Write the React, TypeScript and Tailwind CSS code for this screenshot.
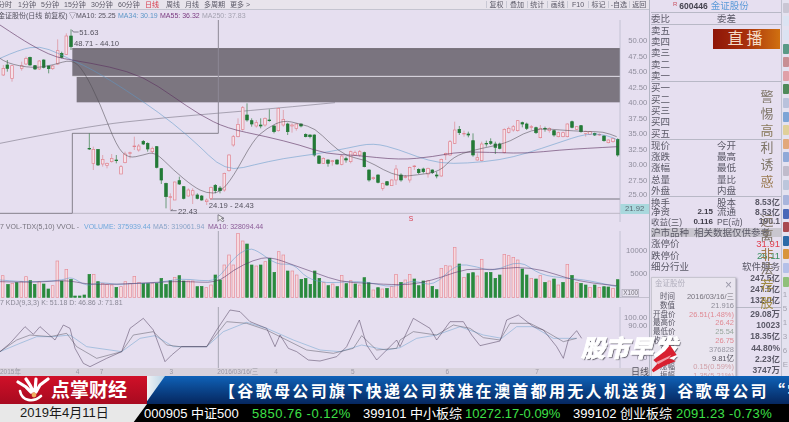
import React from 'react';

type Pt = [number, number];
// coordinates are 3x page pixels, straight from the reference
type Candle = [number, number, number, number, number, 'r' | 'g'];
type Bar = [number, number, 'r' | 'g'];

const shift = <T extends number[] | (number | string)[]>(list: T[], dx: number): T[] =>
    list.map((c) => [(c[0] as number) + dx, ...c.slice(1)] as unknown as T);

const candles: Candle[] = [
    [10, 205, 225, 195, 228, 'r'], [22, 195, 205, 180, 215, 'g'], [36, 197, 235, 195, 245, 'r'], [65, 197, 205, 185, 212, 'r'],
    [78, 175, 192, 170, 195, 'r'], [90, 172, 195, 170, 197, 'g'], [105, 197, 207, 195, 210, 'g'], [118, 183, 207, 180, 210, 'r'],
    [131, 180, 202, 178, 205, 'g'], [146, 198, 206, 198, 220, 'g'], [158, 198, 206, 195, 210, 'r'], [173, 152, 192, 118, 195, 'r'],
    [185, 160, 172, 155, 175, 'g'], [199, 108, 163, 100, 165, 'r'], [213, 108, 140, 88, 150, 'g'],
    [268, 445, 447, 400, 450, 'g'], [280, 448, 490, 440, 510, 'r'], [294, 448, 495, 448, 498, 'g'], [308, 478, 492, 465, 500, 'r'],
    [321, 490, 496, 488, 505, 'r'], [335, 475, 485, 462, 488, 'r'], [349, 480, 482, 465, 490, 'g'], [363, 500, 522, 495, 522, 'r'],
    [375, 462, 488, 455, 490, 'r'], [390, 458, 460, 455, 475, 'r'], [403, 438, 440, 410, 450, 'r'], [416, 438, 450, 432, 455, 'r'],
    [430, 424, 432, 420, 435, 'g'], [443, 430, 447, 427, 455, 'g'], [457, 445, 455, 440, 462, 'r'], [470, 440, 502, 438, 505, 'g'],
    [484, 506, 540, 505, 552, 'g'], [498, 550, 590, 548, 625, 'g'], [511, 590, 592, 580, 630, 'r'], [524, 546, 600, 545, 600, 'r'],
    [538, 542, 552, 530, 555, 'g'], [551, 560, 595, 558, 598, 'g'], [565, 570, 588, 565, 590, 'r'], [578, 572, 585, 565, 612, 'r'],
    [592, 585, 595, 580, 598, 'g'], [605, 588, 600, 585, 602, 'g'], [620, 600, 605, 595, 615, 'r'], [633, 562, 595, 560, 600, 'r'],
    [646, 556, 572, 552, 580, 'g'], [660, 564, 572, 558, 580, 'g'], [673, 520, 570, 518, 575, 'r'], [687, 465, 512, 463, 515, 'r'],
    [700, 410, 435, 405, 440, 'r'], [714, 373, 410, 355, 412, 'r'], [728, 323, 388, 318, 392, 'r'], [741, 345, 360, 310, 365, 'g'],
    [755, 362, 372, 355, 380, 'g'], [769, 368, 378, 360, 383, 'r'], [782, 375, 378, 355, 385, 'g'], [795, 355, 375, 352, 380, 'r'],
    [808, 360, 362, 328, 365, 'g'], [822, 378, 395, 375, 400, 'g'], [835, 325, 392, 323, 395, 'r'], [850, 358, 375, 330, 380, 'r'],
    [863, 372, 395, 368, 405, 'g'], [876, 375, 378, 370, 398, 'r'], [889, 372, 385, 370, 392, 'r'], [903, 372, 378, 370, 382, 'g'],
    [917, 403, 410, 400, 412, 'g'], [930, 405, 410, 403, 415, 'g'], [943, 405, 465, 403, 470, 'g'], [957, 468, 490, 465, 492, 'g'],
    [970, 475, 490, 472, 492, 'r'], [984, 480, 490, 478, 500, 'g'], [997, 482, 485, 480, 497, 'r'], [1011, 480, 492, 478, 494, 'g'],
    [1025, 468, 493, 465, 496, 'r'], [1038, 476, 480, 470, 488, 'g'], [1052, 455, 485, 452, 490, 'r'], [1065, 458, 465, 452, 468, 'r'],
    [1079, 455, 465, 450, 470, 'r'], [1093, 458, 500, 455, 502, 'g'], [1107, 510, 540, 508, 545, 'g'], [1120, 533, 536, 530, 540, 'r'],
    [1134, 525, 547, 523, 550, 'g'], [1148, 550, 565, 548, 572, 'r'], [1161, 545, 555, 543, 558, 'g'], [1175, 540, 557, 538, 558, 'r'],
    [1188, 507, 540, 495, 555, 'r'],
    ...shift<Candle>([
        [3, 525, 540, 520, 545, 'g'], [16, 530, 532, 525, 535, 'r'], [29, 502, 540, 500, 548, 'r'], [43, 498, 500, 495, 510, 'r'],
        [56, 508, 518, 505, 522, 'g'], [70, 507, 515, 503, 520, 'g'], [84, 505, 522, 503, 533, 'r'], [97, 510, 518, 508, 522, 'g'],
        [110, 525, 528, 515, 535, 'g'], [124, 478, 528, 476, 530, 'r'], [137, 460, 465, 458, 480, 'r'], [150, 425, 465, 420, 467, 'r'],
        [164, 390, 430, 365, 432, 'r'], [178, 388, 398, 378, 405, 'g'], [192, 400, 402, 392, 410, 'r'], [205, 402, 405, 395, 412, 'g'],
        [219, 422, 465, 400, 470, 'g'], [232, 473, 480, 460, 482, 'r'], [245, 432, 482, 425, 484, 'r'], [259, 430, 432, 422, 440, 'g'],
        [272, 425, 430, 415, 435, 'g'], [286, 432, 442, 425, 462, 'g'], [299, 432, 445, 428, 448, 'g'], [313, 388, 458, 385, 460, 'r'],
        [326, 385, 397, 380, 400, 'r'], [340, 380, 390, 375, 395, 'r'], [353, 362, 392, 360, 395, 'r'], [367, 368, 372, 365, 382, 'g'],
        [380, 372, 385, 368, 390, 'g'], [394, 380, 382, 375, 390, 'r'], [408, 383, 398, 380, 402, 'g'], [421, 385, 413, 375, 415, 'r'],
        [435, 385, 387, 380, 395, 'g'], [448, 385, 392, 382, 398, 'r'], [462, 392, 405, 390, 410, 'g'], [475, 398, 410, 395, 412, 'r'],
        [489, 398, 410, 395, 412, 'r'], [502, 372, 410, 370, 412, 'r'], [516, 365, 382, 362, 385, 'g'], [530, 380, 388, 378, 390, 'r'],
        [543, 377, 395, 375, 398, 'g'], [557, 395, 400, 392, 410, 'r'], [570, 395, 403, 393, 405, 'r'], [584, 400, 405, 398, 408, 'g'],
        [598, 403, 405, 400, 408, 'r'], [612, 408, 422, 405, 425, 'g'], [625, 420, 428, 418, 430, 'r'], [639, 415, 425, 413, 428, 'r'],
        [653, 418, 465, 415, 470, 'g'],
    ], 1200),
];

const bars: Bar[] = [
    [8, 182, 'r'], [24, 208, 'g'], [37, 205, 'r'], [50, 203, 'g'], [64, 200, 'r'], [78, 185, 'r'], [91, 197, 'g'], [104, 208, 'g'],
    [118, 200, 'r'], [131, 207, 'g'], [145, 222, 'g'], [158, 212, 'r'], [172, 138, 'r'], [185, 198, 'g'], [199, 163, 'r'], [213, 193, 'g'],
    [225, 243, 'g'], [239, 243, 'g'], [253, 240, 'g'], [268, 178, 'g'], [281, 178, 'r'], [294, 200, 'g'], [308, 205, 'r'], [321, 208, 'r'],
    [335, 210, 'r'], [349, 217, 'g'], [363, 215, 'r'], [376, 200, 'r'], [390, 205, 'r'], [403, 184, 'r'], [417, 202, 'r'], [430, 205, 'g'],
    [444, 205, 'g'], [457, 205, 'r'], [470, 205, 'g'], [484, 190, 'g'], [498, 208, 'g'], [511, 197, 'g'], [524, 187, 'r'], [538, 182, 'g'],
    [551, 198, 'g'], [565, 198, 'r'], [578, 198, 'r'], [592, 215, 'g'], [605, 214, 'g'], [619, 218, 'r'], [633, 210, 'r'], [646, 180, 'g'],
    [660, 195, 'g'], [673, 150, 'r'], [687, 120, 'r'], [700, 150, 'r'], [714, 55, 'r'], [728, 78, 'r'], [741, 87, 'g'], [755, 150, 'g'],
    [769, 153, 'r'], [782, 150, 'g'], [796, 140, 'r'], [809, 130, 'g'], [823, 172, 'g'], [836, 110, 'r'], [850, 120, 'r'], [863, 168, 'g'],
    [877, 168, 'r'], [890, 180, 'r'], [904, 193, 'g'], [917, 190, 'g'], [931, 208, 'g'], [944, 168, 'g'], [958, 190, 'g'], [971, 203, 'r'],
    [985, 212, 'g'], [998, 207, 'r'], [1012, 215, 'g'], [1025, 181, 'r'], [1039, 206, 'g'], [1052, 197, 'r'], [1066, 207, 'g'], [1079, 210, 'r'],
    [1093, 188, 'g'], [1106, 203, 'g'], [1120, 225, 'r'], [1134, 218, 'g'], [1147, 222, 'r'], [1161, 220, 'g'], [1175, 215, 'r'], [1188, 178, 'r'],
    ...shift<Bar>([
        [3, 202, 'g'], [16, 195, 'r'], [29, 178, 'r'], [43, 192, 'g'], [56, 212, 'g'], [70, 198, 'g'], [84, 197, 'r'], [97, 214, 'g'],
        [110, 224, 'g'], [124, 160, 'r'], [137, 152, 'r'], [150, 153, 'r'], [164, 97, 'r'], [178, 147, 'g'], [192, 187, 'r'], [205, 176, 'g'],
        [219, 173, 'g'], [232, 183, 'r'], [245, 133, 'r'], [259, 173, 'g'], [272, 172, 'g'], [286, 190, 'g'], [299, 180, 'g'], [313, 118, 'r'],
        [326, 122, 'r'], [340, 127, 'r'], [353, 135, 'r'], [367, 162, 'g'], [380, 180, 'g'], [394, 190, 'r'], [408, 192, 'g'], [421, 182, 'r'],
        [435, 202, 'g'], [448, 198, 'r'], [462, 192, 'g'], [475, 210, 'r'], [489, 202, 'g'], [502, 148, 'r'], [516, 181, 'g'], [530, 203, 'r'],
        [543, 205, 'g'], [557, 210, 'g'], [570, 217, 'r'], [584, 210, 'g'], [598, 217, 'r'], [612, 215, 'g'], [625, 216, 'g'], [639, 220, 'r'],
        [653, 194, 'g'],
    ], 1200),
];

const ma10: Pt[] = [[0, 175], [20, 190], [100, 205], [160, 195], [215, 178], [250, 210], [300, 310], [350, 440], [385, 475], [430, 465], [465, 455], [520, 510], [580, 560], [620, 580], [660, 578], [700, 530], [760, 420], [800, 385], [850, 360], [900, 372], [945, 385], [990, 430], [1040, 470], [1100, 480], [1150, 510], [1200, 530], [1250, 525], [1320, 515], [1360, 470], [1420, 450], [1520, 430], [1570, 400], [1620, 385], [1680, 390], [1760, 395], [1810, 395], [1850, 410]];
const ma34: Pt[] = [[0, 175], [60, 148], [120, 138], [175, 160], [215, 180], [260, 200], [330, 240], [430, 305], [520, 370], [600, 440], [650, 490], [700, 510], [760, 495], [850, 475], [950, 462], [1040, 445], [1120, 428], [1200, 450], [1250, 470], [1320, 490], [1400, 490], [1500, 480], [1580, 460], [1670, 430], [1760, 400], [1820, 405], [1853, 420]];
const ma55: Pt[] = [[0, 75], [60, 115], [120, 150], [170, 172], [215, 180], [330, 200], [430, 230], [520, 290], [600, 345], [680, 385], [800, 410], [900, 435], [980, 462], [1060, 465], [1200, 480], [1300, 470], [1380, 455], [1500, 458], [1580, 460], [1680, 450], [1760, 445], [1853, 440]];
const ma250: Pt[] = [[0, 430], [250, 380], [500, 352], [750, 332], [1005, 308]];

const volA: Pt[] = [[0, 195], [60, 200], [120, 200], [190, 195], [215, 185], [260, 215], [300, 200], [350, 210], [400, 205], [470, 205], [540, 190], [600, 197], [650, 197], [700, 130], [740, 100], [770, 105], [830, 150], [880, 145], [920, 190], [980, 205], [1040, 200], [1100, 200], [1160, 215], [1200, 212], [1240, 195], [1300, 215], [1370, 145], [1430, 155], [1480, 170], [1560, 135], [1620, 180], [1700, 190], [1760, 195], [1850, 215]];
const volB: Pt[] = [[0, 200], [100, 203], [200, 195], [260, 208], [350, 208], [450, 203], [550, 198], [650, 205], [700, 165], [760, 135], [810, 125], [880, 150], [950, 175], [1020, 200], [1100, 205], [1200, 210], [1260, 205], [1330, 185], [1400, 160], [1480, 165], [1550, 155], [1630, 165], [1700, 190], [1780, 205], [1850, 212]];

const kdjJ: Pt[] = [[0, 410], [30, 385], [75, 335], [100, 358], [120, 335], [165, 375], [190, 330], [210, 340], [225, 400], [250, 445], [270, 455], [320, 430], [365, 410], [390, 340], [430, 310], [460, 345], [495, 440], [515, 420], [545, 395], [620, 395], [650, 345], [690, 285], [720, 290], [750, 320], [800, 340], [825, 395], [840, 360], [865, 400], [890, 410], [925, 435], [960, 438], [1010, 425], [1040, 395], [1078, 315], [1100, 390], [1130, 435], [1190, 375], [1200, 395], [1240, 310], [1290, 340], [1310, 375], [1350, 320], [1390, 320], [1415, 360], [1440, 392], [1500, 378], [1520, 315], [1555, 300], [1600, 335], [1630, 345], [1670, 395], [1690, 430], [1705, 375], [1730, 347], [1745, 370]];
const kdjK: Pt[] = [[0, 410], [50, 375], [90, 360], [150, 365], [200, 355], [230, 395], [290, 430], [365, 410], [400, 360], [460, 350], [500, 390], [540, 395], [620, 395], [680, 320], [740, 325], [800, 345], [860, 375], [920, 405], [1000, 415], [1060, 400], [1085, 362], [1130, 405], [1190, 400], [1200, 375], [1240, 350], [1310, 360], [1360, 330], [1410, 340], [1450, 368], [1500, 375], [1530, 325], [1590, 325], [1630, 345], [1690, 380], [1730, 370]];
const kdjD: Pt[] = [[0, 410], [60, 385], [110, 365], [160, 365], [210, 360], [260, 395], [365, 410], [420, 370], [465, 362], [520, 395], [620, 395], [670, 350], [740, 322], [800, 340], [880, 375], [960, 405], [1020, 410], [1085, 390], [1160, 405], [1200, 398], [1250, 370], [1310, 360], [1380, 335], [1450, 360], [1505, 370], [1550, 335], [1600, 335], [1660, 370], [1730, 370]];

const smooth = (p: Pt[]) => {
    let d = `M${p[0][0]} ${p[0][1]}`;
    for (let i = 1; i < p.length - 1; i++) {
        d += ` Q${p[i][0]} ${p[i][1]} ${(p[i][0] + p[i + 1][0]) / 2} ${(p[i][1] + p[i + 1][1]) / 2}`;
    }
    return `${d} L${p[p.length - 1][0]} ${p[p.length - 1][1]}`;
};
const poly = (p: Pt[]) => p.map((c) => c.join(',')).join(' ');

function PriceChart() {
    const axis: [string, number][] = [['50.00', 128], ['47.50', 176], ['45.00', 221], ['42.50', 269], ['40.00', 314], ['37.50', 362], ['35.00', 407], ['32.50', 455], ['30.00', 500], ['27.50', 548], ['25.00', 591]];
    return (
        <svg viewBox="0 60 1947 606" className="block h-[202px] w-[649px]">
            <path d={smooth(ma250)} fill="none" stroke="#6d6a78" strokeWidth="1.6" />
            <rect x="217" y="145" width="1643" height="83" fill="#7a747f" />
            <rect x="230" y="230" width="1630" height="77" fill="#7c7680" />
            <line x1="217" y1="229" x2="1860" y2="229" stroke="#d8d4dc" strokeWidth="3" />
            <line x1="217" y1="146" x2="1860" y2="146" stroke="#5f5a63" strokeWidth="2" />
            <line x1="655" y1="60" x2="655" y2="400" stroke="#8d8996" strokeWidth="3" />
            <path d="M217 400H655M217 400V640M0 640H217" fill="none" stroke="#55525a" strokeWidth="2" />
            <line x1="630" y1="597" x2="1860" y2="597" stroke="#77747e" strokeWidth="3" />
            <line x1="217" y1="640" x2="1860" y2="640" stroke="#a8a4b0" strokeWidth="2" />
            <line x1="1860" y1="60" x2="1860" y2="666" stroke="#b4b6c4" strokeWidth="2" />
            {candles.map(([x, top, bot, wt, wb, c]) => (
                <g key={x}>
                    <line x1={x} y1={wt} x2={x} y2={wb} stroke={c === 'r' ? '#dd8a94' : '#2d7a3f'} strokeWidth="2" />
                    <rect x={x - 4} y={top} width="8" height={bot - top} fill={c === 'r' ? '#f4e2ea' : '#237a37'} stroke={c === 'r' ? '#e0808c' : '#237a37'} strokeWidth="2" />
                </g>
            ))}
            <path d={smooth(ma34)} fill="none" stroke="#5d97c8" strokeWidth="1.6" />
            <path d={smooth(ma55)} fill="none" stroke="#5b2f5e" strokeWidth="1.8" />
            <path d={smooth(ma10)} fill="none" stroke="#4b4850" strokeWidth="1.6" />
            <g fill="#55525e" fontSize="23" fontFamily="Liberation Sans, sans-serif">
                <text x="238" y="106">51.63</text>
                <text x="222" y="138">48.71 - 44.10</text>
                <text x="626" y="623">24.19 - 24.43</text>
                <text x="534" y="641">22.43</text>
            </g>
            <path d="M236 96H220L216 90M530 632H512M512 632L518 628" fill="none" stroke="#55525e" strokeWidth="2" />
            <text x="1226" y="662" fill="#d8394a" fontSize="20" fontFamily="Liberation Sans, sans-serif">S</text>
            <path d="M654 644V664L660 658L668 666L672 662L664 655H672Z" fill="#eeeeee" stroke="#55525e" strokeWidth="2" />
            <g fill="#8f8d9c" fontSize="23" fontFamily="Liberation Sans, sans-serif" textAnchor="end">
                {axis.map(([t, y]) => <text key={t} x="1942" y={y}>{t}</text>)}
            </g>
            <rect x="1861" y="612" width="86" height="30" fill="#a9d8dd" />
            <text x="1904" y="634" fill="#5d6a74" fontSize="23" textAnchor="middle" fontFamily="Liberation Sans, sans-serif">21.92</text>
        </svg>
    );
}

function VolumeChart() {
    return (
        <svg viewBox="0 693 1947 201" className="block h-[67px] w-[649px]">
            <line x1="655" y1="693" x2="655" y2="894" stroke="#a8a6b4" strokeWidth="3" />
            <line x1="1860" y1="693" x2="1860" y2="894" stroke="#b4b6c4" strokeWidth="2" />
            {bars.map(([x, top, c]) => (
                <rect key={x} x={x - 4} y={top + 645} width="8" height={892 - (top + 645)} fill={c === 'r' ? '#f6d9df' : '#2a8a3e'} stroke={c === 'r' ? '#e58c98' : '#2a8a3e'} strokeWidth="2" />
            ))}
            <path d={smooth(volA.map(([x, y]) => [x, y + 645] as Pt))} fill="none" stroke="#5d97c8" strokeWidth="1.6" />
            <path d={smooth(volB.map(([x, y]) => [x, y + 645] as Pt))} fill="none" stroke="#4f2f63" strokeWidth="1.6" />
            <g fill="#8f8d9c" fontSize="23" fontFamily="Liberation Sans, sans-serif" textAnchor="end">
                <text x="1942" y="760">10000</text>
                <text x="1942" y="829">5000</text>
            </g>
            <rect x="1866" y="868" width="50" height="22" fill="#e6e2ee" stroke="#a8a6b4" strokeWidth="2" />
            <text x="1870" y="885" fill="#77747e" fontSize="19" fontFamily="Liberation Sans, sans-serif">X100</text>
            <line x1="1860" y1="893" x2="1947" y2="893" stroke="#a8a6b4" strokeWidth="2" />
        </svg>
    );
}

function KdjChart() {
    const shifted = (p: Pt[]) => poly(p.map(([x, y]) => [x, y + 645] as Pt));
    return (
        <svg viewBox="0 921 1947 183" className="block h-[61px] w-[649px]">
            <line x1="655" y1="921" x2="655" y2="1104" stroke="#a8a6b4" strokeWidth="3" />
            <line x1="1860" y1="921" x2="1860" y2="1104" stroke="#b4b6c4" strokeWidth="2" />
            <polyline points={shifted(kdjD)} fill="none" stroke="#6aa0cc" strokeWidth="1.5" strokeLinejoin="round" />
            <polyline points={shifted(kdjK)} fill="none" stroke="#5a5864" strokeWidth="1.5" strokeLinejoin="round" />
            <polyline points={shifted(kdjJ)} fill="none" stroke="#4a3a58" strokeWidth="1.5" strokeLinejoin="round" />
            <g fill="#8f8d9c" fontSize="23" fontFamily="Liberation Sans, sans-serif" textAnchor="end">
                <text x="1942" y="960">100.00</text>
                <text x="1942" y="985">90.00</text>
                <text x="1942" y="1081">0.0</text>
            </g>
        </svg>
    );
}

function Row({ a, v, b, w, tone = 'text-[#5a5866]', strong = false }: { a?: React.ReactNode; v?: string; b?: React.ReactNode; w?: string; tone?: string; strong?: boolean }) {
    return (
        <div className="flex h-[11.3px] items-center whitespace-nowrap text-[9.5px] leading-none">
            <span className="w-[35px]">{a}</span>
            <span className="w-[27px] text-right text-[8px] font-bold text-[#3e3c48]">{v}</span>
            <span className="ml-[4px] w-[32px]">{b}</span>
            <span className={`flex-1 pr-[1px] text-right ${tone} ${strong ? 'text-[8.5px] font-bold' : ''}`}>{w}</span>
        </div>
    );
}

const toolIcons = ['bg-[#c9c6d4]', 'bg-[#dbe3f2]', 'bg-[#dbe3f2]', 'bg-[#5a9a86]', 'bg-[#c78f94]', 'bg-[#e0a0a8]', 'bg-[#4f8a5a]', 'bg-[#b9c2dc]', 'bg-[#7da4d6]', 'bg-[#e0d09a]', 'bg-[#e2a87a]', 'bg-[#8fa9d8]', 'bg-[#c0bccc]', 'bg-[#bcc6dc]'];
const toolIcons2 = ['bg-[#a8b4dc]', 'bg-[#4a68b8]', 'bg-[#a84a50]', 'bg-[#2c6aa8]', 'bg-[#d8943c]', 'bg-[#b4c0e8]', 'bg-[#8fc07a]'];

function SidePanel() {
    return (
        <div className="relative flex w-[132px] shrink-0 flex-col overflow-hidden border-l border-[#b4b6c4] pl-[1px] text-[#5a5866]">
            <div className="flex h-[13px] items-center border-b border-[#b8b8c6] pl-[22px]">
                <span className="mr-[2px] self-start text-[6px] text-[#c85060]">R</span>
                <span className="mr-[3px] text-[8.5px] font-bold text-[#45434f]">600446</span>
                <span className="text-[9.5px] text-[#5b9ad8]">金证股份</span>
            </div>
            <div className="h-[12px] border-b border-[#b8b8c6]"><Row a="委比" b="委差" /></div>
            <div className="border-b border-[#b8b8c6]">
                {['卖五', '卖四', '卖三', '卖二', '卖一'].map((t) => <Row key={t} a={t} />)}
            </div>
            <div className="border-b border-[#b8b8c6]">
                {['买一', '买二', '买三', '买四', '买五'].map((t) => <Row key={t} a={t} />)}
            </div>
            <div className="border-b border-[#b8b8c6]">
                <Row a="现价" b="今开" /><Row a="涨跌" b="最高" /><Row a="涨幅" b="最低" /><Row a="总量" b="量比" /><Row a="外盘" b="内盘" />
            </div>
            <Row a="换手" b="股本" w="8.53亿" strong />
            <Row a="净资" v="2.15" b="流通" w="8.53亿" strong />
            <Row a={<span className="text-[8.5px]">收益(三)</span>} v="0.116" b={<span className="text-[8.5px]">PE(动)</span>} w="190.1" strong />
            <div className="mt-[1px] flex h-[11.5px] items-center bg-[#c9c6cf] text-[9.5px] leading-none whitespace-nowrap">沪市品种<span className="ml-[5px]">相关数据仅供参考</span></div>
            <div className="mt-[1px]">
                <Row a="涨停价" w="31.91" tone="text-[#e04050]" />
                <Row a="跌停价" w="26.11" tone="text-[#3a9060]" />
                <Row a="细分行业" w="软件服务" />
                <Row w="247.5亿" strong />
                <Row w="247.5亿" strong />
                <Row w="132.0亿" strong />
            </div>
            <div className="mt-[1px] border-t border-[#b8b8c6]">
                <Row w="29.08万" strong />
                <Row w="10023" strong />
                <Row w="18.35亿" strong />
                <Row w="44.80%" strong />
                <Row w="2.23亿" strong />
                <Row w="3747万" strong />
            </div>

            <div className="absolute top-[29px] left-[63px] flex h-[20px] w-[67px] items-center justify-center bg-linear-to-r from-[#8e1408] via-[#a8300c] to-[#d07010] text-[16px] tracking-[3px] text-[#f4dcc8]">直播</div>

            <div className="absolute top-[88px] right-[5px] flex w-[18px] flex-col items-center text-[13px] leading-[17px] text-[#7d7466]">
                <span>警</span><span>惕</span><span className="text-[#8a7a5c]">高</span><span>利</span><span>诱</span><span className="text-[#9a7a50]">惑</span>
                <span className="mt-[22px]">远</span><span className="-mt-[2px]">离</span><span className="mt-[2px] text-[#a07a4a]">非</span><span className="-mt-[3px]">法</span><span className="text-[#a08a40]">荐</span><span className="text-[#a08a40]">股</span>
            </div>

            <div className="absolute top-[277px] left-[1px] h-[110px] w-[85px] border border-[#c8c6d0] bg-[#e9e5ef] text-[7.5px] leading-[8.8px] shadow-[1px_1px_2px_#9a98a8]">
                <div className="flex h-[13px] items-center justify-between px-[3px] text-[#b0aebc]">
                    <span>金证股份</span><span className="text-[12px] leading-none text-[#9a98a8]">×</span>
                </div>
                <div className="px-[1px] pt-[2px]">
                    {[
                        ['时间', '2016/03/16/三', 'text-[#77747e]'],
                        ['数值', '21.916', 'text-[#8e8c98]'],
                        ['开盘价', '26.51(1.48%)', 'text-[#e08a94]'],
                        ['最高价', '26.42', 'text-[#e08a94]'],
                        ['最低价', '25.54', 'text-[#9aa89e]'],
                        ['收盘价', '26.75', 'text-[#e08a94]'],
                        ['总量', '376828', 'text-[#9a98a4]'],
                        ['总额', '9.81亿', 'text-[#55525e]'],
                        ['涨幅', '0.15(0.59%)', 'text-[#d0a0a8]'],
                        ['振幅', '1.35(5.21%)', 'text-[#d0a0a8]'],
                    ].map(([k, v, c]) => (
                        <div key={k} className="flex h-[8.8px] items-center justify-between whitespace-nowrap">
                            <span className="w-[22px] text-right text-[#5a5866]">{k}</span>
                            <span className={c}>{v}</span>
                        </div>
                    ))}
                </div>
            </div>
        </div>
    );
}

function ToolStrip() {
    return (
        <div className="flex w-[8px] shrink-0 flex-col items-center overflow-hidden border-l border-[#c0c2d0] bg-[#e4e2f0] pt-[1px]">
            {toolIcons.map((c, i) => (
                <div key={i} className="flex h-[13.6px] shrink-0 items-center"><div className={`h-[10px] w-[6px] rounded-[1px] ${c}`} /></div>
            ))}
            <div className="h-[2px] shrink-0" />
            {toolIcons2.map((c, i) => (
                <div key={i} className="flex h-[13.6px] shrink-0 items-center"><div className={`h-[10px] w-[6px] rounded-[1px] ${c}`} /></div>
            ))}
            <div className="mt-[2px] flex flex-col gap-[4px] text-[8px] leading-[10px] text-[#a4a2b0]">
                <span>1</span><span>5</span><span>1</span><span>3</span><span>6</span><span>E</span>
            </div>
        </div>
    );
}

function Logo() {
    return (
        <svg viewBox="0 0 36 28" className="h-[28px] w-[36px] shrink-0">
            <path d="M2 6L10 11L15 16M10 3L14 9L17 15M20 3L19 15M32 3L24 9L20 16" stroke="#fff" strokeWidth="3.2" strokeLinecap="round" fill="none" />
            <path d="M4 15C6 25 17 27 25 20" stroke="#fff" strokeWidth="2.6" strokeLinecap="round" fill="none" />
            <circle cx="18" cy="19" r="2.4" fill="#f0b060" />
        </svg>
    );
}

const mainButtons = ['复权', '叠加', '统计', '画线', 'F10', '标记', '-自选', '返回'];

export default function App() {
    return (
        <div className="relative flex h-[422px] w-[789px] flex-col overflow-hidden bg-[#e6dff0] font-['Liberation_Sans','Noto_Sans_CJK_SC',sans-serif]">
            <div className="flex h-[376px] shrink-0 overflow-hidden blur-[0.5px]">
                <div className="flex w-[649px] shrink-0 flex-col overflow-hidden">
                    <div className="flex h-[10px] items-center justify-between whitespace-nowrap border-b border-[#c4c4d0] bg-[#e8e4ec] text-[7px] leading-none text-[#5a5866]">
                        <div className="flex items-center">
                            <span className="-ml-[2px] w-[20px]">分时</span>
                            <span className="w-[23px]">1分钟</span>
                            <span className="w-[23px]">5分钟</span>
                            <span className="w-[27px]">15分钟</span>
                            <span className="w-[27px]">30分钟</span>
                            <span className="w-[27px]">60分钟</span>
                            <span className="w-[21px] text-[#d8394a]">日线</span>
                            <span className="w-[19px]">周线</span>
                            <span className="w-[19px]">月线</span>
                            <span className="w-[26px]">多周期</span>
                            <span>更多 &gt;</span>
                        </div>
                        <div className="flex items-center">
                            {mainButtons.map((t) => (
                                <span key={t} className="w-[20.4px] border-l border-[#c8c8d4] text-center">{t}</span>
                            ))}
                        </div>
                    </div>
                    <div className="flex h-[10px] items-center whitespace-nowrap text-[7px] leading-none">
                        <span className="-ml-[2px] w-[71px] text-[#55525e]">金证股份(日线 前复权)</span>
                        <span className="w-[7px] text-[#55525e]">▽</span>
                        <span className="w-[42px] text-[#55525e]">MA10: 25.25</span>
                        <span className="w-[42px] text-[#5d97c8]">MA34: 30.19</span>
                        <span className="w-[42px] text-[#7a3a80]">MA55: 36.32</span>
                        <span className="text-[#a4a2b0]">MA250: 37.83</span>
                    </div>
                    <PriceChart />
                    <div className="flex h-[9px] items-center whitespace-nowrap text-[7px] leading-none text-[#77747e]">
                        <span className="w-[84px]">7 VOL-TDX(5,10) VVOL -</span>
                        <span className="w-[69px] text-[#6fa8dc]">VOLUME: 375939.44</span>
                        <span className="w-[55px] text-[#8aa4c8]">MA5: 319061.94</span>
                        <span className="text-[#8a5a96]">MA10: 328094.44</span>
                    </div>
                    <VolumeChart />
                    <div className="flex h-[9px] items-center whitespace-nowrap text-[7px] leading-none text-[#8a8896]">7 KDJ(9,3,3) K: 51.18 D: 46.86 J: 71.81</div>
                    <KdjChart />
                    <div className="flex h-[8px] items-center whitespace-nowrap bg-[#d8d2dc] text-[6.5px] leading-none text-[#9a98a4]">
                        <span className="w-[76px]">2015年</span>
                        <span className="w-[24px]">4</span>
                        <span className="w-[70px]">7</span>
                        <span className="w-[48px]">3</span>
                        <span className="w-[57px]">2016/03/16/三</span>
                        <span className="w-[77px]">4</span>
                        <span className="w-[95px]">5</span>
                        <span className="w-[90px]">6</span>
                        <span className="w-[96px]">7</span>
                        <span className="text-[9px] text-[#55525e]">日线</span>
                    </div>
                </div>
                <SidePanel />
                <ToolStrip />
            </div>

            <div className="flex h-[28px] shrink-0 overflow-hidden">
                <div className="flex w-[147px] shrink-0 items-center bg-linear-to-b from-[#d01028] to-[#a80a20] pl-[16px]">
                    <Logo />
                    <span className="ml-[-1px] text-[19px] leading-none font-bold whitespace-nowrap text-white">点掌财经</span>
                </div>
                <div className="relative flex flex-1 items-center overflow-hidden bg-linear-to-b from-[#0f62b8] to-[#06275f] pl-[72px] font-['Noto_Sans_CJK_SC',sans-serif] text-[16px] leading-none font-bold tracking-[2.33px] whitespace-nowrap text-white">
                    <div className="absolute top-0 left-0 h-full w-[18px] bg-linear-to-r from-[#f0f2f4] to-[#b8d4e8] [clip-path:polygon(0_0,100%_0,0_90%)]" />
                    【谷歌母公司旗下快递公司获准在澳首都用无人机送货】谷歌母公司“宇
                </div>
            </div>
            <div className="flex h-[18px] shrink-0 items-center overflow-hidden bg-black text-[13px] leading-none whitespace-nowrap">
                <div className="h-full w-[147px] shrink-0 bg-[#e8e8e8] pl-[20px] text-[13px] leading-[18px] text-[#1a1a1a] [clip-path:polygon(0_0,100%_0,91%_100%,0_100%)]">2019年4月11日</div>
                <span className="-ml-[3px] w-[108px] text-white">000905 中证500</span>
                <span className="w-[111px] tracking-[0.5px] text-[#3ee048]">5850.76 -0.12%</span>
                <span className="w-[102px] text-white">399101 中小板综</span>
                <span className="w-[108px] text-[#3ee048]">10272.17-0.09%</span>
                <span className="w-[103px] text-white">399102 创业板综</span>
                <span className="tracking-[0.3px] text-[#3ee048]">2091.23 -0.73%</span>
            </div>

            <div className="absolute top-[325px] left-[570px] h-[60px] w-[120px] overflow-hidden">
                <span className="absolute top-[6px] left-[11px] text-[24px] leading-[36px] font-black whitespace-nowrap text-white italic [-webkit-text-stroke:0.8px_#ffffff] [text-shadow:1px_1px_1px_#55525e]">股市早发</span>
                <svg viewBox="0 0 360 180" className="absolute inset-0 h-full w-full">
                    <path d="M245 135L262 116L250 105L285 78L300 60L320 90L296 100L318 108L280 124L250 142Z" fill="#d82030" />
                    <path d="M258 112L304 90L296 100L264 118Z" fill="#f0a0a8" />
                </svg>
            </div>
        </div>
    );
}
